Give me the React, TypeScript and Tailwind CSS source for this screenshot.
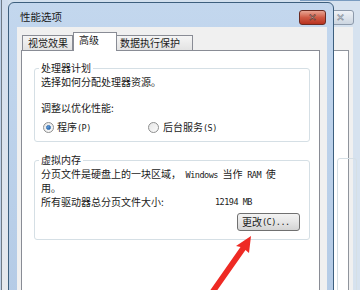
import React from "react";

const cjk = { fontFamily: '"Noto Sans CJK SC", "Noto Sans", sans-serif' };
const mono = { fontFamily: '"DejaVu Sans Mono", "Liberation Mono", monospace' };

function M({ children }: { children: React.ReactNode }) {
  return (
    <span className="text-[8.5px] tracking-[-0.5px]" style={mono}>
      {children}
    </span>
  );
}

function Radio({ checked }: { checked?: boolean }) {
  return (
    <span className="w-[11px] h-[11px] rounded-full border border-[#8e8f8f] bg-gradient-to-br from-[#e6e6e6] to-[#fbfbfb] flex items-center justify-center shrink-0">
      {checked && (
        <span className="w-[5px] h-[5px] rounded-full bg-gradient-to-br from-[#7ab0e6] to-[#1f5fa8] border border-[#2e6fb3]" />
      )}
    </span>
  );
}

function GroupBox({
  label,
  className,
  children,
}: {
  label: string;
  className?: string;
  children: React.ReactNode;
}) {
  return (
    <div
      className={
        "relative border border-[#d5dfe5] rounded-[3px] " + (className ?? "")
      }
    >
      <span className="absolute left-[4px] top-[-7px] bg-white px-[2px] text-[10px] leading-[12px]">
        {label}
      </span>
      {children}
    </div>
  );
}

export default function App() {
  return (
    <div
      className="relative w-[360px] h-[290px] overflow-hidden bg-[#d3e0ee] text-[#1a1a1a]"
      style={cjk}
    >
      {/* left background strip */}
      <div className="absolute left-0 top-0 h-[290px] w-[8px] flex">
        <div className="w-[1px] bg-[#bdd1ea]" />
        <div className="w-[1px] bg-[#6f7a86]" />
        <div className="flex-1 bg-gradient-to-b from-[#cfdced] to-[#e6e9ee]" />
      </div>

      {/* background window on the right */}
      <div className="absolute left-[300px] top-0 w-[60px] h-[300px] bg-[#d6e2ef] border-t border-[#7a9cc0]">
        <div className="absolute left-[27px] top-[9px] w-[27px] h-[15px] rounded-[3px] border border-[#8d9aab] bg-gradient-to-b from-[#eef2f7] to-[#cdd6e1] flex items-center justify-center">
          <span
            className="text-[10px] leading-none font-bold text-[#f8f8f8]"
            style={{ fontFamily: '"DejaVu Sans", sans-serif', WebkitTextStroke: "0.6px #7d8896" }}
          >
            ✕
          </span>
        </div>
        <div className="absolute left-0 top-[26px] w-[53px] h-[280px] bg-[#f0f0f0]">
          <div className="absolute left-0 top-[23px] w-[49px] h-[260px] border border-[#8f949c] bg-white">
            <div className="absolute left-[36px] top-[107px] w-[20px] h-[200px] rounded-[3px] border border-[#d5dfe5]" />
          </div>
        </div>
      </div>

      {/* main dialog */}
      <div className="absolute left-[8px] top-[2px] w-[326px] h-[300px] rounded-t-[6px] border border-[#3d5f7e] bg-gradient-to-b from-[#c3d7ee] to-[#b4cbe6] flex flex-col">
        {/* title bar */}
        <div className="h-[24px] flex items-start justify-between pl-[11px] pr-[7px]">
          <span className="mt-[8px] text-[10.5px] leading-[12px] text-[#1a1a1a]">性能选项</span>
          <div className="mt-[7px] w-[27px] h-[15px] rounded-[3px] border border-[#6b2b22] bg-gradient-to-b from-[#e8a493] via-[#cf5a45] to-[#b8321f] flex items-center justify-center">
            <span
              className="text-[10px] leading-none font-bold text-white"
              style={{ fontFamily: '"DejaVu Sans", sans-serif', WebkitTextStroke: "0.6px #5a1f16" }}
            >
              ✕
            </span>
          </div>
        </div>

        {/* client area */}
        <div className="flex-1 ml-[8px] mr-[6px] bg-[#f0f0f0] pt-[5px] pl-[4px] pr-[7px] flex flex-col">
          {/* tabs */}
          <div className="flex items-end h-[18px] pl-[1px]">
            <div className="h-[15px] w-[51px] border border-b-0 border-[#898c95] bg-gradient-to-b from-[#f5f5f5] to-[#e3e3e3] text-[10px] leading-[12px] pl-[5px] pt-[1px]">
              视觉效果
            </div>
            <div className="relative z-10 -mb-[1px] h-[19px] w-[44px] border border-b-0 border-[#898c95] bg-white text-[10px] leading-[12px] pl-[5px] pt-[1px]">
              高级
            </div>
            <div className="h-[15px] w-[76px] border border-b-0 border-l-0 border-[#898c95] bg-gradient-to-b from-[#f5f5f5] to-[#e3e3e3] text-[10px] leading-[12px] pl-[3px] pt-[1px]">
              数据执行保护
            </div>
          </div>

          {/* tab panel */}
          <div className="flex-1 border border-[#898c95] bg-white pl-[12px] pr-[9px] pt-[17px]">
            <GroupBox label="处理器计划" className="pt-[7px] pb-[8px] pl-[6px]">
              <div className="text-[10px] leading-[12px]">选择如何分配处理器资源。</div>
              <div className="mt-[14px] text-[10px] leading-[12px]">调整以优化性能:</div>
              <div className="mt-[7px] flex items-center h-[12px]">
                <div className="flex items-center w-[107px] pl-[2px]">
                  <Radio checked />
                  <span className="ml-[3px] text-[10px] leading-[12px]">
                    程序<M>(P)</M>
                  </span>
                </div>
                <div className="flex items-center">
                  <Radio />
                  <span className="ml-[4px] text-[10px] leading-[12px]">
                    后台服务<M>(S)</M>
                  </span>
                </div>
              </div>
            </GroupBox>

            <GroupBox label="虚拟内存" className="mt-[18px] pt-[7px] pb-[8px] pl-[6px] pr-[9px]">
              <div className="text-[10px] leading-[12px]">
                分页文件是硬盘上的一块区域，<M> Windows </M>当作<M> RAM </M>使
              </div>
              <div className="mt-[1px] text-[10px] leading-[12px]">用。</div>
              <div className="mt-[2px] flex text-[10px] leading-[12px]">
                <span className="w-[174px]">所有驱动器总分页文件大小:</span>
                <M>12194 MB</M>
              </div>
              <div className="mt-[5px] flex justify-end">
                <div className="w-[63px] h-[18px] rounded-[3px] border border-[#707070] bg-gradient-to-b from-[#f3f3f3] via-[#e6e6e6] to-[#d4d4d4] flex items-center pl-[4px] text-[10px] leading-[12px]">
                  更改<M>(C)...</M>
                </div>
              </div>
            </GroupBox>
          </div>
        </div>
      </div>

      {/* red arrow */}
      <svg className="absolute left-0 top-0" width="360" height="290" viewBox="0 0 360 290">
        <polygon
          points="251,236 249,253 245.5,250 216,292 209,292 240.5,247 236,246"
          fill="#ee2a24"
        />
      </svg>
    </div>
  );
}
